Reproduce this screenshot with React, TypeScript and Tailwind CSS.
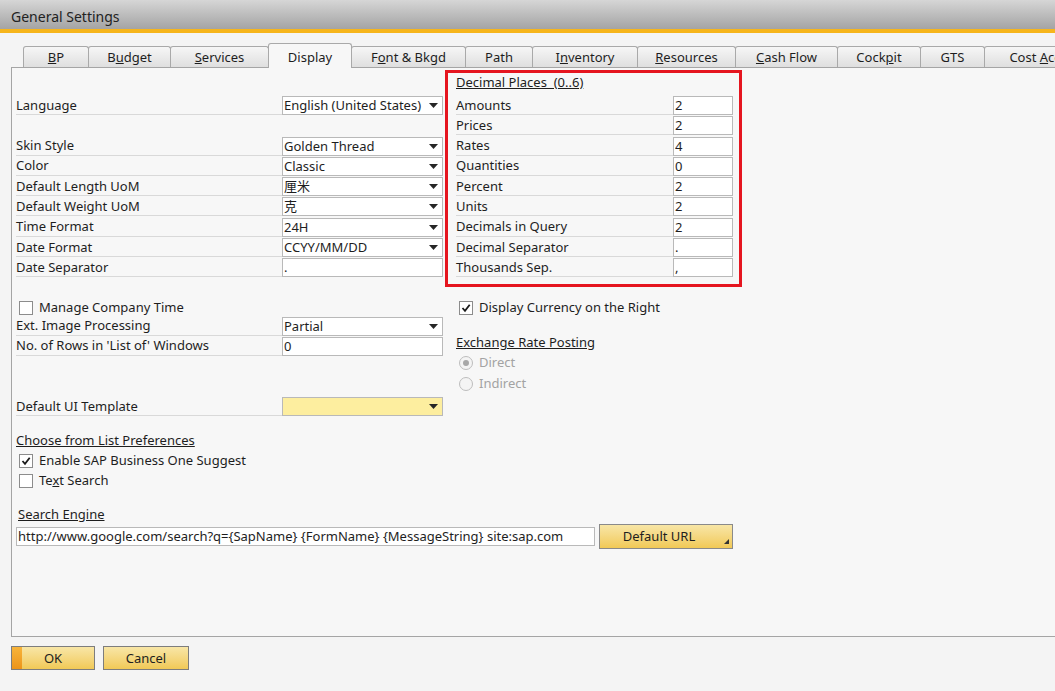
import React from 'react';

const font = { fontFamily: '"Noto Sans", "Noto Sans CJK SC", sans-serif' };

const tabs = [
  { w: 'w-[66px]', label: <><span className="underline">B</span>P</> },
  { w: 'w-[83px]', label: <>B<span className="underline">u</span>dget</> },
  { w: 'w-[99px]', label: <><span className="underline">S</span>ervices</> },
  { w: 'w-[84px]', label: <>Display</>, active: true },
  { w: 'w-[115px]', label: <>F<span className="underline">o</span>nt &amp; Bkgd</> },
  { w: 'w-[68px]', label: <>Path</> },
  { w: 'w-[106px]', label: <>I<span className="underline">n</span>ventory</> },
  { w: 'w-[99px]', label: <><span className="underline">R</span>esources</> },
  { w: 'w-[103px]', label: <><span className="underline">C</span>ash Flow</> },
  { w: 'w-[84px]', label: <>Cock<span className="underline">p</span>it</> },
  { w: 'w-[65px]', label: <>GTS</> },
  { w: 'w-[150px]', label: <>Cost <span className="underline">A</span>ccounting</> },
];

const Arrow = () => (
  <svg width="9" height="5" viewBox="0 0 9 5" className="shrink-0">
    <path d="M0 0 H9 L4.5 5 Z" fill="#262626" />
  </svg>
);

const Field = ({ value, combo, w, bg = 'bg-white' }: { value: React.ReactNode; combo?: boolean; w: string; bg?: string }) => (
  <div className={`${w} ${bg} h-[19px] shrink-0 border border-[#b9b9b9] flex items-center pl-[1px] pr-[4px]`}>
    <span className="flex-1 overflow-hidden whitespace-nowrap leading-[17px]">{value}</span>
    {combo && <Arrow />}
  </div>
);

const Row = ({ label, children }: { label: React.ReactNode; children: React.ReactNode }) => (
  <div className="flex h-[20.3px] items-start">
    <div className="flex-1 h-[19px] border-b border-[#d9d9d9] flex items-center leading-none">{label}</div>
    {children}
  </div>
);

const Check = ({ checked }: { checked?: boolean }) => (
  <div className="w-[14px] h-[14px] border border-[#8c8c8c] bg-white flex items-center justify-center shrink-0">
    {checked && (
      <svg width="10" height="10" viewBox="0 0 10 10">
        <path d="M1.5 5 L4 7.8 L8.7 1.8" stroke="#1a1a1a" strokeWidth="1.8" fill="none" />
      </svg>
    )}
  </div>
);

const Radio = ({ on }: { on?: boolean }) => (
  <div className="w-[14px] h-[14px] rounded-full border border-[#bdbdbd] bg-[#f4f4f4] flex items-center justify-center shrink-0">
    {on && <div className="w-[6px] h-[6px] rounded-full bg-[#a8a8a8]" />}
  </div>
);

const leftRows: [string, string][] = [
  ['Skin Style', 'Golden Thread'],
  ['Color', 'Classic'],
  ['Default Length UoM', '厘米'],
  ['Default Weight UoM', '克'],
  ['Time Format', '24H'],
  ['Date Format', 'CCYY/MM/DD'],
];

const decimals: [string, string][] = [
  ['Amounts', '2'],
  ['Prices', '2'],
  ['Rates', '4'],
  ['Quantities', '0'],
  ['Percent', '2'],
  ['Units', '2'],
  ['Decimals in Query', '2'],
  ['Decimal Separator', '.'],
  ['Thousands Sep.', ','],
];

export default function App() {
  return (
    <div className="w-[1055px] h-[691px] overflow-hidden bg-[#f4f4f4] text-[13px] text-[#1e1e1e] flex flex-col" style={font}>
      <div className="h-[29px] shrink-0 bg-linear-to-b from-[#d6d6d6] to-[#a4a4a4] pl-[11px] pt-[3px] flex items-center text-[14px] text-[#222]">
        General Settings
      </div>
      <div className="h-[4px] shrink-0 bg-[#f6b51c]" />

      <div className="mt-[10px] pl-[23px] h-[24px] flex items-end shrink-0">
        {tabs.map((t, i) => (
          <div
            key={i}
            className={`${t.w} shrink-0 flex items-center justify-center border-t border-l border-r border-[#a9a9a9] rounded-t-[3px] leading-none whitespace-nowrap ${
              i > 0 ? '-ml-px' : ''
            } ${
              t.active
                ? 'h-[25px] -mb-px relative z-10 bg-[#f7f7f7] pt-[3px]'
                : 'h-[21px] bg-linear-to-b from-[#f6f6f6] to-[#dfdfdf]'
            }`}
          >
            <span>{t.label}</span>
          </div>
        ))}
      </div>

      <div className="ml-[11px] w-[1100px] h-[570px] shrink-0 border border-[#a5a5a5] bg-[#f7f7f7] flex flex-col">
        <div className="flex items-start">
          {/* left column */}
          <div className="w-[431px] pl-[4px] pt-[28px] flex flex-col">
            <Row label="Language">
              <Field w="w-[161px]" combo value="English (United States)" />
            </Row>
            <div className="h-[20.3px]" />
            {leftRows.map(([l, v]) => (
              <Row key={l} label={l}>
                <Field w="w-[161px]" combo value={v} />
              </Row>
            ))}
            <Row label="Date Separator">
              <Field w="w-[161px]" value="." />
            </Row>
            <div className="mt-[20px] h-[18px] flex items-center pl-[3px] gap-[6px]">
              <Check />
              <span className="leading-none">Manage Company Time</span>
            </div>
            <Row label="Ext. Image Processing">
              <Field w="w-[161px]" combo value="Partial" />
            </Row>
            <Row label="No. of Rows in 'List of' Windows">
              <Field w="w-[161px]" value="0" />
            </Row>
            <div className="mt-[40px]">
              <Row label="Default UI Template">
                <Field w="w-[161px]" combo value="" bg="bg-[#fdee9f]" />
              </Row>
            </div>
          </div>

          {/* right column */}
          <div className="ml-[2px] flex flex-col">
            <div className="mt-[2px] w-[297px] border-[3px] border-[#e5151f] pl-[8px] pr-[6px] pb-[5px] flex flex-col">
              <div className="h-[23px] flex items-center pb-[4px]">
                <span className="underline leading-none">Decimal Places&nbsp; (0..6)</span>
              </div>
              {decimals.map(([l, v]) => (
                <Row key={l} label={l}>
                  <Field w="w-[60px]" value={v} />
                </Row>
              ))}
            </div>
            <div className="mt-[12px] h-[18px] flex items-center pl-[14px] gap-[6px]">
              <Check checked />
              <span className="leading-none">Display Currency on the Right</span>
            </div>
            <div className="mt-[16px] h-[20px] flex items-center pl-[11px]">
              <span className="underline leading-none">Exchange Rate Posting</span>
            </div>
            <div className="h-[20px] flex items-center pl-[14px] gap-[6px] text-[#a3a3a3]">
              <Radio on />
              <span className="leading-none">Direct</span>
            </div>
            <div className="mt-[1px] h-[20px] flex items-center pl-[14px] gap-[6px] text-[#a3a3a3]">
              <Radio />
              <span className="leading-none">Indirect</span>
            </div>
          </div>
        </div>

        {/* bottom section */}
        <div className="pl-[4px] flex flex-col">
          <div className="mt-[14px] h-[18px] flex items-center">
            <span className="underline leading-none">Choose from List Preferences</span>
          </div>
          <div className="mt-[2px] h-[18px] flex items-center pl-[3px] gap-[6px]">
            <Check checked />
            <span className="leading-none">Enable SAP Business One Suggest</span>
          </div>
          <div className="mt-[2px] h-[18px] flex items-center pl-[3px] gap-[6px]">
            <Check />
            <span className="leading-none">Te<span className="underline">x</span>t Search</span>
          </div>
          <div className="mt-[16px] h-[18px] flex items-center pl-[2px]">
            <span className="underline leading-none">Search Engine</span>
          </div>
          <div className="h-[26px] flex items-center">
            <Field w="w-[579px]" value="http://www.google.com/search?q={SapName} {FormName} {MessageString} site:sap.com" />
            <div className="relative ml-[4px] w-[134px] h-[25px] border border-[#8a8a8a] bg-linear-to-b from-[#f8e6a6] to-[#f1c955] flex items-center justify-center pr-[14px] leading-none">
              Default URL
              <svg width="5" height="5" viewBox="0 0 5 5" className="absolute right-[3px] bottom-[4px]">
                <path d="M5 0 V5 H0 Z" fill="#333" />
              </svg>
            </div>
          </div>
        </div>
      </div>

      <div className="mt-[9px] ml-[11px] flex gap-[8px]">
        <div className="w-[84px] h-[24px] border border-[#7d7d7d] bg-linear-to-b from-[#f8e6a6] to-[#f1c955] flex items-stretch leading-none">
          <div className="w-[10px] bg-linear-to-b from-[#f7b43a] to-[#ec9418]" />
          <div className="flex-1 flex items-center justify-center pr-[10px]">OK</div>
        </div>
        <div className="w-[86px] h-[24px] border border-[#7d7d7d] bg-linear-to-b from-[#f8e6a6] to-[#f1c955] flex items-center justify-center leading-none">
          Cancel
        </div>
      </div>
    </div>
  );
}
